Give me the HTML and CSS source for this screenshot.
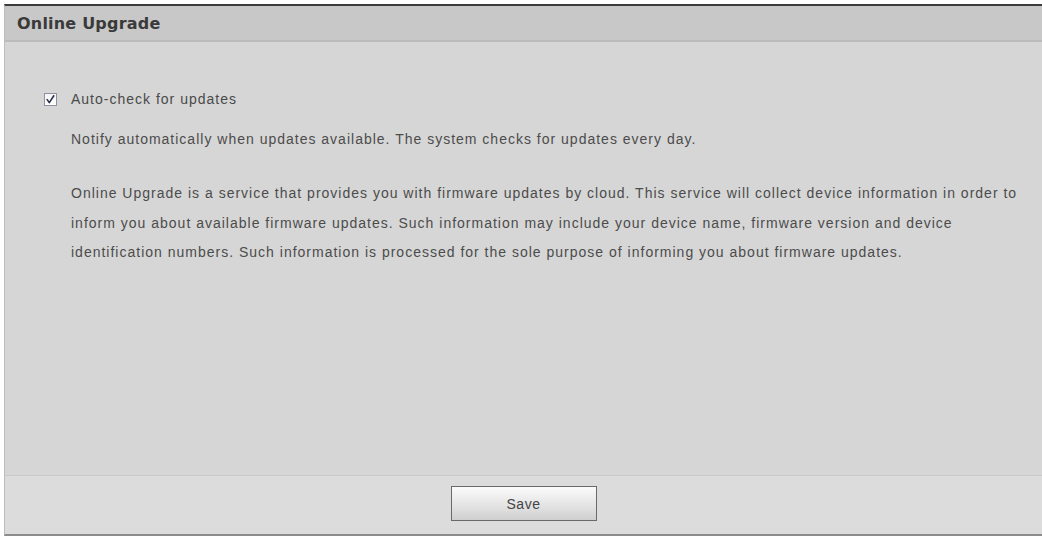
FILE: index.html
```html
<!DOCTYPE html>
<html>
<head>
<meta charset="utf-8">
<link rel="stylesheet" href="styles.css">
</head>
<body>
<div class="panel">
  <div class="header">Online Upgrade</div>
  <div class="content">
    <label class="check-row">
      <span class="checkbox"><svg width="11" height="11" viewBox="0 0 11 11"><path d="M2.2 5.6 L4.3 8.6 L8.8 1.8" fill="none" stroke="#2a2f4a" stroke-width="1.6" stroke-linecap="round" stroke-linejoin="round"/></svg></span>
      <span class="check-label">Auto-check for updates</span>
    </label>
    <p class="note">Notify automatically when updates available. The system checks for updates every day.</p>
    <p class="desc">Online Upgrade is a service that provides you with firmware updates by cloud. This service will collect device information in order to inform you about available firmware updates. Such information may include your device name, firmware version and device identification numbers. Such information is processed for the sole purpose of informing you about firmware updates.</p>
  </div>
  <div class="footer">
    <button class="save">Save</button>
  </div>
</div>
</body>
</html>
```
FILE: styles.css
```css
html, body {
  margin: 0;
  padding: 0;
  background: #ffffff;
}
body {
  font-family: "Liberation Sans", Arial, sans-serif;
  padding-top: 4px;
  padding-left: 4px;
}
.panel {
  width: 1037px;
  border-top: 2px solid #3c3c3c;
  border-left: 1px solid #bdbdbd;
  border-bottom: 2px solid #8c8c8c;
  background: #d6d6d6;
}
.header {
  height: 36px;
  box-sizing: border-box;
  padding-top: 2px;
  line-height: 32px;
  background: #c8c8c8;
  border-bottom: 2px solid #bcbcbc;
  padding-left: 12px;
  font-family: "DejaVu Sans", Verdana, sans-serif;
  font-weight: bold;
  font-size: 16px;
  letter-spacing: 0.2px;
  color: #3a3a3a;
}
.content {
  height: 433px;
  box-sizing: border-box;
  padding: 50px 10px 0 39px;
  color: #4c4c4c;
  font-size: 14px;
  letter-spacing: 1px;
}
.check-row {
  display: flex;
  align-items: center;
  gap: 14px;
  height: 14px;
}
.checkbox {
  width: 11px;
  height: 11px;
  border: 1px solid #8f90a0;
  background: linear-gradient(#f4f4f4, #ffffff);
  display: inline-flex;
}
.check-label {
  color: #4a4a4a;
}
.note {
  margin: 0;
  padding-left: 27px;
  margin-top: 18px;
  line-height: 30px;
}
.desc {
  margin: 0;
  padding-left: 27px;
  margin-top: 25px;
  line-height: 29.5px;
}
.footer {
  height: 59px;
  border-top: 1px solid #c9c9c9;
  background: #dcdcdc;
  display: flex;
  justify-content: center;
  align-items: flex-start;
  padding-top: 10px;
  box-sizing: border-box;
}
.save {
  width: 146px;
  height: 35px;
  border: 1px solid #6a6a6a;
  background: linear-gradient(#fbfbfb, #e4e4e4 55%, #cfcfcf);
  font-family: "Liberation Sans", Arial, sans-serif;
  font-size: 14px;
  letter-spacing: 0.5px;
  color: #444;
  padding: 0;
}
```
